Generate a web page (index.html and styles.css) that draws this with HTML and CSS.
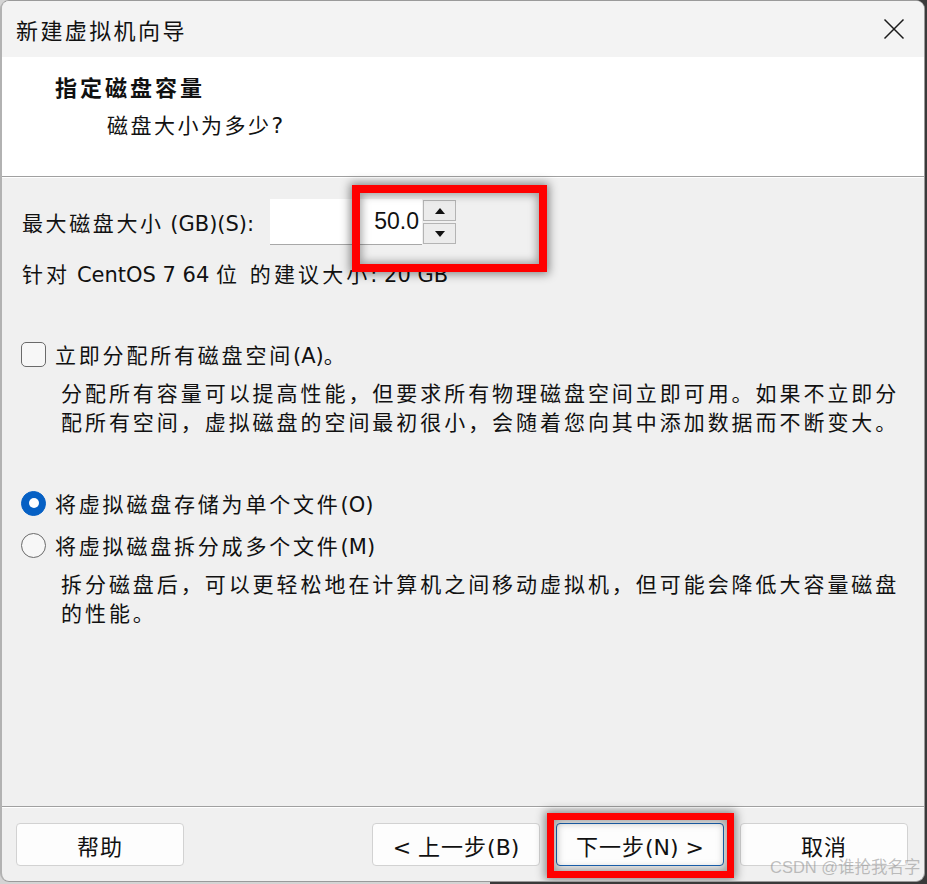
FILE: index.html
```html
<!DOCTYPE html>
<html lang="zh-CN">
<head>
<meta charset="utf-8">
<title>新建虚拟机向导</title>
<link rel="stylesheet" href="styles.css">
</head>
<body>
<div class="window">
  <div class="titlebar">
    <span class="title">新建虚拟机向导</span>
    <svg class="close" width="22" height="22" viewBox="0 0 22 22"><path d="M1.5 1.5 L20.5 20.5 M20.5 1.5 L1.5 20.5" stroke="#1b1b1b" stroke-width="1.5" fill="none"/></svg>
  </div>
  <div class="header">
    <div class="h-title">指定磁盘容量</div>
    <div class="h-sub">磁盘大小为多少<span class="l">?</span></div>
  </div>
  <div class="sep"></div>
  <div class="content">
    <div class="row-size">
      <span class="lbl-size">最大磁盘大小<span class="l"> (GB)(S):</span></span>
      <div class="input"><span>50.0</span></div>
      <div class="spin">
        <div class="spin-btn"><svg width="10" height="6" viewBox="0 0 10 6"><path d="M0 6 L5 0 L10 6 Z" fill="#111"/></svg></div>
        <div class="spin-btn"><svg width="10" height="6" viewBox="0 0 10 6"><path d="M0 0 L5 6 L10 0 Z" fill="#111"/></svg></div>
      </div>
    </div>
    <div class="row-hint">针对<span class="l"> CentOS 7 64 </span>位 的建议大小<span class="l">: 20 GB</span></div>
    <div class="opt opt-check">
      <span class="checkbox"></span>
      <span class="opt-lbl">立即分配所有磁盘空间<span class="l">(A)</span>。</span>
    </div>
    <p class="desc">分配所有容量可以提高性能，但要求所有物理磁盘空间立即可用。如果不立即分<br>配所有空间，虚拟磁盘的空间最初很小，会随着您向其中添加数据而不断变大。</p>
    <div class="opt opt-r1">
      <span class="radio on"></span>
      <span class="opt-lbl">将虚拟磁盘存储为单个文件<span class="l">(O)</span></span>
    </div>
    <div class="opt opt-r2">
      <span class="radio"></span>
      <span class="opt-lbl">将虚拟磁盘拆分成多个文件<span class="l">(M)</span></span>
    </div>
    <p class="desc">拆分磁盘后，可以更轻松地在计算机之间移动虚拟机，但可能会降低大容量磁盘<br>的性能。</p>
  </div>
  <div class="sep"></div>
  <div class="footer">
    <button class="btn">帮助</button>
    <div class="spacer"></div>
    <button class="btn"><span class="l">&lt; </span>上一步<span class="l">(B)</span></button>
    <button class="btn primary">下一步<span class="l">(N) &gt;</span></button>
    <button class="btn">取消</button>
  </div>
  <div class="mark mark-size"></div>
  <div class="mark mark-next"></div>
  <div class="watermark">CSDN @谁抢我名字</div>
</div>
</body>
</html>
```
FILE: styles.css
```css
* { box-sizing: border-box; }
html, body { margin: 0; padding: 0; }
body {
  width: 927px;
  height: 884px;
  background: linear-gradient(to right, #d4d4d4 0, #d4d4d4 490px, #3a3a3a 490px);
  font-family: "DejaVu Sans", "Noto Sans CJK SC", sans-serif;
  color: #111;
  overflow: hidden;
}
.l { letter-spacing: 0; }
.window {
  position: relative;
  width: 925px;
  height: 882px;
  background: #f0f0f0;
  border: 1px solid #9a9a9a;
  border-left: 2px solid #b2b2b2;
  border-radius: 9px;
  overflow: hidden;
  display: flex;
  flex-direction: column;
}
.titlebar {
  height: 56px;
  flex: none;
  background: #f3f3f3;
  display: flex;
  align-items: center;
  justify-content: space-between;
  padding: 0 19px 0 14px;
}
.title {
  font-size: 22px;
  letter-spacing: 2.4px;
  color: #111;
  margin-top: -1px;
}
.close { display: block; margin-top: -1px; }
.header {
  height: 119px;
  flex: none;
  background: #fff;
  padding-left: 53px;
  padding-top: 19px;
}
.h-title {
  font-size: 22px;
  font-weight: bold;
  letter-spacing: 3px;
  line-height: 26px;
}
.h-sub {
  font-size: 21px;
  letter-spacing: 2.5px;
  line-height: 26px;
  margin-top: 11px;
  margin-left: 52px;
}
.h-sub .l { font-size: 22px; }
.sep {
  flex: none;
  height: 2px;
  border-top: 1px solid #a0a0a0;
  background: #fff;
}
.content {
  flex: 1;
  padding-left: 19px;
  font-size: 21px;
}
.row-size {
  display: flex;
  align-items: center;
  height: 46px;
  margin-top: 21px;
}
.lbl-size {
  letter-spacing: 2.6px;
  width: 249px;
  padding-left: 1px;
  white-space: nowrap;
}
.input {
  width: 152px;
  height: 46px;
  background: #fff;
  border-bottom: 1px solid #a8a8a8;
  display: flex;
  align-items: center;
  justify-content: flex-end;
  padding-right: 3px;
  font-family: "Liberation Sans", sans-serif;
  font-size: 23px;
}
.spin {
  width: 33px;
  height: 44px;
  display: flex;
  flex-direction: column;
  justify-content: space-between;
  margin-left: 1px;
}
.spin-btn {
  height: 21px;
  background: #ececec;
  border: 1px solid #b4b4b4;
  display: flex;
  align-items: center;
  justify-content: center;
}
.spin-btn svg { display: block; }
.row-hint {
  line-height: 30px;
  margin-top: 15px;
  letter-spacing: 3.1px;
  padding-left: 1px;
}
.opt {
  display: flex;
  align-items: center;
  height: 30px;
}
.opt-check { margin-top: 49px; }
.opt-r1 { margin-top: 50px; }
.opt-r2 { margin-top: 12px; }
.opt-lbl {
  letter-spacing: 2.8px;
  margin-left: 9px;
}
.checkbox {
  width: 25px;
  height: 25px;
  border: 1.5px solid #6a6a6a;
  border-radius: 5px;
  background: #f7f7f7;
  flex: none;
}
.radio {
  width: 25px;
  height: 25px;
  border: 1.5px solid #6a6a6a;
  border-radius: 50%;
  background: #f7f7f7;
  flex: none;
  position: relative;
}
.radio.on {
  background: #0660c4;
  border-color: #0660c4;
}
.radio.on::after {
  content: "";
  position: absolute;
  left: 50%;
  top: 50%;
  width: 10px;
  height: 10px;
  margin: -5px 0 0 -5px;
  border-radius: 50%;
  background: #fff;
}
.desc {
  margin: 11px 0 0 40px;
  line-height: 29px;
  letter-spacing: 2.95px;
  white-space: nowrap;
}
.footer {
  flex: none;
  height: 73px;
  display: flex;
  align-items: flex-start;
  padding: 15px 0 0 14px;
  gap: 16px;
}
.spacer { flex: 1; margin-left: -16px; }
.btn {
  width: 168px;
  height: 43px;
  background: #fdfdfd;
  border: 1px solid #d2d2d2;
  border-radius: 4px;
  font-family: "DejaVu Sans", "Noto Sans CJK SC", sans-serif;
  font-size: 22px;
  color: #111;
  padding: 0;
  letter-spacing: 1px;
}
.btn .l { letter-spacing: 0; }
.btn.primary { border-color: #1b65b5; }
.btn:last-child { margin-right: 16px; }
.mark {
  position: absolute;
  border: 8px solid #ff0000;
  box-shadow: 0 0 9px 2px rgba(0,0,0,0.45), inset 0 0 9px 2px rgba(0,0,0,0.35);
}
.mark-size { left: 350px; top: 184px; width: 195px; height: 87px; }
.mark-next { left: 545px; top: 812px; width: 187px; height: 65px; border-width: 7px; }
.watermark {
  position: absolute;
  left: 768px;
  top: 857px;
  line-height: 19px;
  font-family: "Liberation Sans", "Noto Sans CJK SC", sans-serif;
  font-size: 16.5px;
  color: rgba(140,140,140,0.55);
  white-space: nowrap;
}
```
